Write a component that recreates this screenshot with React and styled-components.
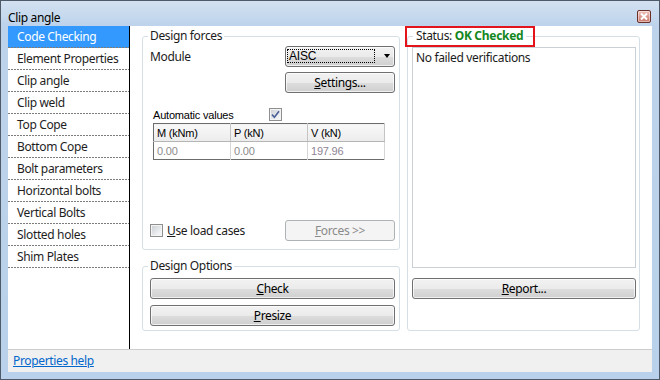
import React from "react";
import styled, { createGlobalStyle } from "styled-components";

const UI_FONT = `"Noto Sans", "DejaVu Sans", sans-serif`;
const SMALL_FONT = `"Liberation Sans", Arial, sans-serif`;

const GlobalStyle = createGlobalStyle`
  html, body { margin: 0; padding: 0; background: #fff; }
  body { font-family: ${UI_FONT}; font-size: 12px; }
  *, *::before, *::after { box-sizing: border-box; }
`;

const Window = styled.div`
  width: 660px;
  height: 380px;
  border: 1px solid #4f5a69;
  background: linear-gradient(to bottom, #d3e1f1 0px, #bdd3eb 25px, #b9d1ea 100%);
  display: flex;
  flex-direction: column;
  padding: 0 7px 7px;
  font-family: ${UI_FONT};
  font-size: 12px;
  letter-spacing: -0.35px;
  color: #1b1b1b;
`;

const TitleBar = styled.div`
  height: 25px;
  flex: none;
  display: flex;
  align-items: flex-end;
  justify-content: space-between;
`;

const Title = styled.span`
  line-height: 16px;
  color: #000;
`;

const CloseBtn = styled.span`
  width: 14px;
  height: 13px;
  margin: 0 1px 3px 0;
  border: 1px solid #6b2f2a;
  border-radius: 2px;
  background: linear-gradient(to bottom, #eec3bd 0%, #dc9a90 50%, #c8776c 100%);
  box-shadow: inset 0 0 0 1px rgba(255, 255, 255, 0.45);
  display: flex;
  align-items: center;
  justify-content: center;
`;

const Client = styled.div`
  flex: 1;
  background: #fff;
  display: flex;
  flex-direction: column;
  min-height: 0;
`;

const Main = styled.div`
  flex: 1;
  display: flex;
  min-height: 0;
`;

const Sidebar = styled.ul`
  list-style: none;
  margin: 0;
  padding: 0;
  width: 122px;
  flex: none;
  border-right: 1px solid #000;
  background: #fff;
`;

const NavItem = styled.li`
  height: 22px;
  padding: 1px 0 1px 9px;
  line-height: 20px;
  white-space: nowrap;
  color: ${(p) => (p.$active ? "#fff" : "#1e1e1e")};
  background: linear-gradient(to right, #7c7c7c 2px, transparent 2px) left bottom / 3px 1px repeat-x,
    ${(p) => (p.$active ? "#3399ff" : "#fff")};
`;

const Content = styled.div`
  flex: 1;
  display: grid;
  grid-template-columns: 258px 233px;
  column-gap: 7px;
  padding: 2px 12px 0 12px;
  align-content: start;
`;

const Column = styled.div`
  display: flex;
  flex-direction: column;
  gap: 8px;
`;

const Group = styled.fieldset`
  margin: 0;
  padding: 0;
  min-width: 0;
  border: 1px solid #d5dfe5;
  border-radius: 3px;
`;

const Legend = styled.legend`
  position: relative;
  margin-left: 5px;
  padding: 0 ${(p) => p.$pad || 2}px;
  line-height: 16px;
  color: #1b1b1b;
  white-space: nowrap;
`;

const Highlight = styled.span`
  position: absolute;
  left: -8px;
  top: -2px;
  width: 130px;
  height: 21px;
  border: 2px solid #e3141c;
  pointer-events: none;
`;

const Ok = styled.span`
  color: #13871e;
  font-weight: 700;
  letter-spacing: -0.3px;
`;

const FormBody = styled.div`
  height: 205px;
  display: flex;
  flex-direction: column;
  padding: 2px 4px 8px 7px;
`;

const Row = styled.div`
  display: flex;
  align-items: center;
  justify-content: space-between;
  height: 21px;
  flex: none;
`;

const Label = styled.span`
  line-height: 16px;
  padding-top: 1px;
`;

const Button = styled.button`
  width: ${(p) => p.$w || "100%"};
  height: 21px;
  flex: none;
  padding: 0;
  font: inherit;
  letter-spacing: inherit;
  color: ${(p) => (p.disabled ? "#8a8a8a" : "#000")};
  border: 1px solid ${(p) => (p.disabled ? "#adb2b5" : "#707070")};
  border-radius: 3px;
  background: ${(p) =>
    p.disabled
      ? "#f4f4f4"
      : "linear-gradient(to bottom, #f2f2f2 0%, #ebebeb 50%, #dddddd 51%, #cfcfcf 100%)"};
  box-shadow: ${(p) => (p.disabled ? "none" : "inset 0 0 0 1px rgba(255,255,255,0.7)")};
  line-height: 18px;
  text-align: center;
  align-self: ${(p) => p.$align || "stretch"};
  margin-top: ${(p) => p.$mt || 0}px;
`;

const U = styled.span`
  text-decoration: underline;
  text-underline-offset: 1px;
`;

const Combo = styled.div`
  width: 110px;
  height: 21px;
  border: 1px solid #707070;
  border-radius: 3px;
  background: linear-gradient(to bottom, #f2f2f2 0%, #ebebeb 50%, #dddddd 51%, #cfcfcf 100%);
  box-shadow: inset 0 0 0 1px rgba(255, 255, 255, 0.7);
  display: flex;
  align-items: center;
  padding: 0 0 1px 1px;
`;

const FocusRect = styled.span`
  width: 88px;
  height: 14px;
  border: 1px dotted #000;
  line-height: 12px;
  padding-left: 1px;
  color: #000;
  font-family: ${SMALL_FONT};
  letter-spacing: -0.2px;
`;

const Arrow = styled.span`
  margin-left: 9px;
  width: 0;
  height: 0;
  border-left: 3.5px solid transparent;
  border-right: 3.5px solid transparent;
  border-top: 4px solid #000;
`;

const AutoRow = styled.div`
  display: flex;
  align-items: center;
  height: 15px;
  margin-top: 14px;
  padding-left: 3px;
  flex: none;
`;

const SmallLabel = styled.span`
  width: 116px;
  font-family: ${SMALL_FONT};
  font-size: 11px;
  letter-spacing: -0.2px;
  color: #000;
`;

const Box = styled.span`
  width: 13px;
  height: 13px;
  flex: none;
  border: 1px solid #8e8f8f;
  background: linear-gradient(135deg, #c9cdd2 0%, #eef0f2 70%, #f8f8f8 100%);
  box-shadow: inset 0 0 0 1px #f4f4f4;
  display: flex;
  align-items: center;
  justify-content: center;
`;

const Table = styled.table`
  margin: 1px 0 0 3px;
  width: 232px;
  border-collapse: collapse;
  table-layout: fixed;
  border: 1px solid #6c6c6c;
  font-family: ${SMALL_FONT};
  font-size: 11px;
  letter-spacing: -0.2px;
  flex: none;
`;

const Th = styled.th`
  height: 18px;
  padding: 0 3px;
  text-align: left;
  font-weight: 400;
  color: #000;
  background: linear-gradient(to bottom, #f8f8f8, #ececec);
  border-right: 1px solid #c4c4c4;
  border-bottom: 1px solid #b5b5b5;
`;

const Td = styled.td`
  height: 18px;
  padding: 0 3px;
  color: ${(p) => p.$c || "#8c8c8c"};
  border-right: 1px solid #d6d6d6;
`;

const BottomRow = styled(Row)`
  margin-top: auto;
`;

const CheckLabel = styled.label`
  display: flex;
  align-items: center;
  gap: 4px;
`;

const OptionsBody = styled.div`
  display: flex;
  flex-direction: column;
  gap: 6px;
  padding: 4px 4px 4px 7px;
`;

const StatusBody = styled.div`
  display: flex;
  flex-direction: column;
  padding: 3px 3px 0 4px;
`;

const Results = styled.div`
  height: 221px;
  border: 1px solid #c9d0d6;
  padding: 2px 3px 1px;
  line-height: 16px;
`;

const Footer = styled.div`
  height: 23px;
  flex: none;
  border-top: 1px solid #cdcdcd;
  background: #f0f0f0;
  display: flex;
  align-items: center;
  padding-left: 5px;
`;

const HelpLink = styled.a`
  color: #0066cc;
  text-decoration: underline;
  text-underline-offset: 1px;
  line-height: 16px;
`;

const NAV = [
  "Code Checking",
  "Element Properties",
  "Clip angle",
  "Clip weld",
  "Top Cope",
  "Bottom Cope",
  "Bolt parameters",
  "Horizontal bolts",
  "Vertical Bolts",
  "Slotted holes",
  "Shim Plates",
];

function CheckBox({ checked }) {
  return (
    <Box>
      {checked && (
        <svg width="9" height="9" viewBox="0 0 9 9">
          <path d="M1 4.6 L3.4 7.2 L8 1.2" fill="none" stroke="#4b5f98" strokeWidth="1.6" />
        </svg>
      )}
    </Box>
  );
}

export default function App() {
  return (
    <>
      <GlobalStyle />
      <Window>
        <TitleBar>
          <Title>Clip angle</Title>
          <CloseBtn>
            <svg width="8" height="7" viewBox="0 0 8 7">
              <path d="M1 0.5 L7 6.5 M7 0.5 L1 6.5" stroke="#fff" strokeWidth="2" />
            </svg>
          </CloseBtn>
        </TitleBar>
        <Client>
          <Main>
            <Sidebar>
              {NAV.map((n, i) => (
                <NavItem key={n} $active={i === 0}>
                  {n}
                </NavItem>
              ))}
            </Sidebar>
            <Content>
              <Column>
                <Group>
                  <Legend>Design forces</Legend>
                  <FormBody>
                    <Row>
                      <Label>Module</Label>
                      <Combo>
                        <FocusRect>AISC</FocusRect>
                        <Arrow />
                      </Combo>
                    </Row>
                    <Button $w="110px" $align="flex-end" $mt={5}>
                      <U>S</U>ettings...
                    </Button>
                    <AutoRow>
                      <SmallLabel>Automatic values</SmallLabel>
                      <CheckBox checked />
                    </AutoRow>
                    <Table>
                      <thead>
                        <tr>
                          <Th>M (kNm)</Th>
                          <Th>P (kN)</Th>
                          <Th>V (kN)</Th>
                        </tr>
                      </thead>
                      <tbody>
                        <tr>
                          <Td>0.00</Td>
                          <Td>0.00</Td>
                          <Td $c="#8e8595">197.96</Td>
                        </tr>
                      </tbody>
                    </Table>
                    <BottomRow>
                      <CheckLabel>
                        <CheckBox />
                        <span>
                          <U>U</U>se load cases
                        </span>
                      </CheckLabel>
                      <Button $w="110px" disabled>
                        <U>F</U>orces &gt;&gt;
                      </Button>
                    </BottomRow>
                  </FormBody>
                </Group>
                <Group>
                  <Legend>Design Options</Legend>
                  <OptionsBody>
                    <Button>
                      <U>C</U>heck
                    </Button>
                    <Button>
                      <U>P</U>resize
                    </Button>
                  </OptionsBody>
                </Group>
              </Column>
              <Group>
                <Legend $pad={3}>
                  Status: <Ok>OK Checked</Ok>
                  <Highlight />
                </Legend>
                <StatusBody>
                  <Results>No failed verifications</Results>
                  <Button $mt={10}>
                    <U>R</U>eport...
                  </Button>
                </StatusBody>
              </Group>
            </Content>
          </Main>
          <Footer>
            <HelpLink href="#">Properties help</HelpLink>
          </Footer>
        </Client>
      </Window>
    </>
  );
}
